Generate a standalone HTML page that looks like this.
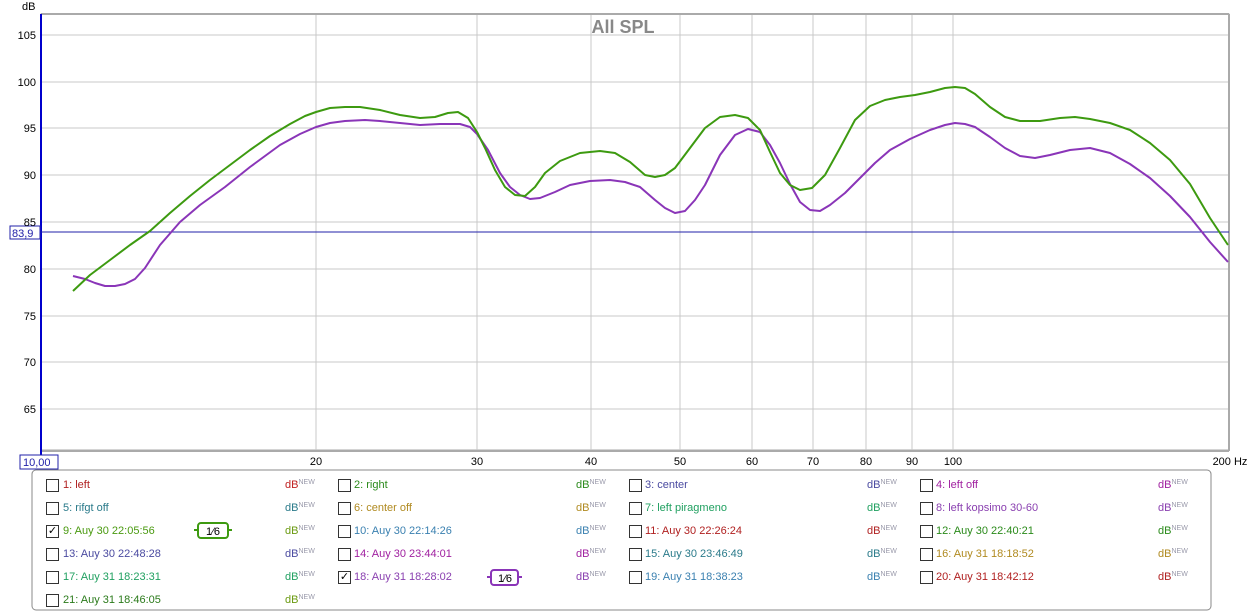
<!DOCTYPE html>
<html><head><meta charset="utf-8"><style>
body{margin:0;width:1248px;height:613px;background:#fff;font-family:"Liberation Sans",Arial,sans-serif;overflow:hidden;position:relative}
.t{position:absolute;font-size:11px;white-space:nowrap}
.cb{position:absolute;width:11px;height:11px;border:1px solid #333;background:#fff}
.db{position:absolute;font-size:11px}
.db sup{font-size:7px;color:#99a;vertical-align:4px}
.lg{position:absolute;left:0;top:2px;width:1248px;height:613px}
</style></head><body>
<svg width="1248" height="613" style="position:absolute;left:0;top:0">
<text x="22" y="10" font-size="11" font-family="Liberation Sans" fill="#000">dB</text>
<rect x="41" y="14" width="1188" height="436" fill="#fff" stroke="#aaa"/>
<g stroke="#c8c8c8" stroke-width="1">
<line x1="41" y1="35" x2="1229" y2="35"/><line x1="41" y1="82" x2="1229" y2="82"/><line x1="41" y1="128" x2="1229" y2="128"/><line x1="41" y1="175" x2="1229" y2="175"/><line x1="41" y1="222" x2="1229" y2="222"/><line x1="41" y1="269" x2="1229" y2="269"/><line x1="41" y1="316" x2="1229" y2="316"/><line x1="41" y1="362" x2="1229" y2="362"/><line x1="41" y1="409" x2="1229" y2="409"/>
<line x1="316" y1="14" x2="316" y2="450"/><line x1="477" y1="14" x2="477" y2="450"/><line x1="591" y1="14" x2="591" y2="450"/><line x1="680" y1="14" x2="680" y2="450"/><line x1="752" y1="14" x2="752" y2="450"/><line x1="813" y1="14" x2="813" y2="450"/><line x1="866" y1="14" x2="866" y2="450"/><line x1="912" y1="14" x2="912" y2="450"/><line x1="953" y1="14" x2="953" y2="450"/>
</g>
<line x1="41" y1="14" x2="1229" y2="14" stroke="#aaa" stroke-width="2"/>
<line x1="41" y1="451" x2="1229" y2="451" stroke="#aaa" stroke-width="2"/>
<line x1="1229" y1="14" x2="1229" y2="451" stroke="#aaa" stroke-width="2"/>
<line x1="41" y1="14" x2="41" y2="463" stroke="#00c" stroke-width="2"/>
<line x1="41" y1="232" x2="1229" y2="232" stroke="#22a" stroke-width="1"/>
<rect x="10" y="226" width="30" height="13" fill="#fff" stroke="#22a"/>
<text x="12" y="237" font-size="11" font-family="Liberation Sans" fill="#22a">83,9</text>
<rect x="20" y="455" width="38" height="14" fill="#fff" stroke="#22a"/>
<text x="23" y="466" font-size="11" font-family="Liberation Sans" fill="#22a">10,00</text>
<text x="623" y="33" font-size="18" font-weight="bold" font-family="Liberation Sans" fill="#888" text-anchor="middle">All SPL</text>
<g font-size="11" font-family="Liberation Sans" fill="#000" text-anchor="end">
<text x="36" y="39">105</text><text x="36" y="86">100</text><text x="36" y="132">95</text><text x="36" y="179">90</text><text x="36" y="226">85</text><text x="36" y="273">80</text><text x="36" y="320">75</text><text x="36" y="366">70</text><text x="36" y="413">65</text>
</g>
<g font-size="11" font-family="Liberation Sans" fill="#000" text-anchor="middle">
<text x="316" y="465">20</text><text x="477" y="465">30</text><text x="591" y="465">40</text><text x="680" y="465">50</text><text x="752" y="465">60</text><text x="813" y="465">70</text><text x="866" y="465">80</text><text x="912" y="465">90</text><text x="953" y="465">100</text><text x="1230" y="465">200 Hz</text>
</g>
<polyline fill="none" stroke="#8a35b8" stroke-width="2" stroke-linejoin="round" points="73,276 85,279 95,283 105,286 115,286 125,284 135,279 145,268 160,245 180,222 200,205 225,187 250,167 280,145 300,134 316,127 330,123 345,121 365,120 380,121 400,123 420,125 440,124 460,124 470,127 477,134 488,150 500,173 510,187 520,195 530,199 540,198 555,192 570,185 590,181 610,180 625,182 640,187 655,200 665,208 675,213 685,211 695,200 705,185 720,155 735,135 748,129 760,132 770,145 780,163 790,184 800,202 810,210 820,211 830,205 845,193 860,178 875,163 890,150 910,139 930,130 945,125 955,123 965,124 975,127 990,137 1005,148 1020,156 1035,158 1050,155 1070,150 1090,148 1110,153 1130,164 1150,178 1170,196 1190,217 1210,242 1228,262"/>
<polyline fill="none" stroke="#3d9a10" stroke-width="2" stroke-linejoin="round" points="73,291 90,275 110,260 130,245 150,231 170,213 190,196 210,180 230,165 250,150 270,136 290,124 305,116 316,112 330,108 345,107 360,107 380,110 400,115 420,118 435,117 448,113 458,112 468,118 477,132 485,148 495,170 505,187 515,195 525,196 535,187 545,173 560,161 580,153 600,151 615,153 630,162 645,175 655,177 665,175 675,168 690,148 705,128 720,117 735,115 748,118 760,130 770,152 780,173 790,185 800,190 812,188 825,175 840,148 855,120 870,106 885,100 900,97 915,95 930,92 945,88 955,87 965,88 975,94 990,107 1005,117 1020,121 1040,121 1060,118 1075,117 1090,119 1110,123 1130,130 1150,143 1170,160 1190,184 1210,218 1228,245"/>
<rect x="32" y="470" width="1179" height="140" rx="4" fill="none" stroke="#888"/>
<rect x="198" y="523" width="30" height="15" rx="3" fill="#fff" stroke="#3d9a10" stroke-width="2"/>
<line x1="194" y1="530" x2="198" y2="530" stroke="#3d9a10" stroke-width="2"/><line x1="228" y1="530" x2="232" y2="530" stroke="#3d9a10" stroke-width="2"/>
<text x="213" y="535" font-size="11" font-family="Liberation Sans" fill="#000" text-anchor="middle">1⁄6</text>
<rect x="491" y="570" width="27" height="15" rx="3" fill="#fff" stroke="#8a35b8" stroke-width="2"/>
<line x1="487" y1="577" x2="491" y2="577" stroke="#8a35b8" stroke-width="2"/><line x1="518" y1="577" x2="522" y2="577" stroke="#8a35b8" stroke-width="2"/>
<text x="505" y="582" font-size="11" font-family="Liberation Sans" fill="#000" text-anchor="middle">1⁄6</text>
</svg>
<div class="lg">
<div class="cb" style="left:46px;top:477px"></div><div class="t" style="left:63px;top:477px;color:#b02020">1: left</div><div class="db" style="left:285px;top:477px;color:#c02020">dB<sup>NEW</sup></div>
<div class="cb" style="left:338px;top:477px"></div><div class="t" style="left:354px;top:477px;color:#2a8a1a">2: right</div><div class="db" style="left:576px;top:477px;color:#2a8a1a">dB<sup>NEW</sup></div>
<div class="cb" style="left:629px;top:477px"></div><div class="t" style="left:645px;top:477px;color:#4a4aa0">3: center</div><div class="db" style="left:867px;top:477px;color:#4a4aa0">dB<sup>NEW</sup></div>
<div class="cb" style="left:920px;top:477px"></div><div class="t" style="left:936px;top:477px;color:#a020a0">4: left off</div><div class="db" style="left:1158px;top:477px;color:#a020a0">dB<sup>NEW</sup></div>

<div class="cb" style="left:46px;top:500px"></div><div class="t" style="left:63px;top:500px;color:#2a7a8a">5: rifgt off</div><div class="db" style="left:285px;top:500px;color:#2a7a8a">dB<sup>NEW</sup></div>
<div class="cb" style="left:338px;top:500px"></div><div class="t" style="left:354px;top:500px;color:#b08a20">6: center off</div><div class="db" style="left:576px;top:500px;color:#b08a20">dB<sup>NEW</sup></div>
<div class="cb" style="left:629px;top:500px"></div><div class="t" style="left:645px;top:500px;color:#20a060">7: left piragmeno</div><div class="db" style="left:867px;top:500px;color:#20a060">dB<sup>NEW</sup></div>
<div class="cb" style="left:920px;top:500px"></div><div class="t" style="left:936px;top:500px;color:#8a40b0">8: left kopsimo 30-60</div><div class="db" style="left:1158px;top:500px;color:#8a40b0">dB<sup>NEW</sup></div>

<div class="cb" style="left:46px;top:523px;font-size:11px;line-height:11px;text-align:center">✓</div><div class="t" style="left:63px;top:523px;color:#4a9a10">9: Auy 30 22:05:56</div><div class="db" style="left:285px;top:523px;color:#6a9a10">dB<sup>NEW</sup></div>
<div class="cb" style="left:338px;top:523px"></div><div class="t" style="left:354px;top:523px;color:#3a80b0">10: Auy 30 22:14:26</div><div class="db" style="left:576px;top:523px;color:#3a80b0">dB<sup>NEW</sup></div>
<div class="cb" style="left:629px;top:523px"></div><div class="t" style="left:645px;top:523px;color:#b02020">11: Auy 30 22:26:24</div><div class="db" style="left:867px;top:523px;color:#b02020">dB<sup>NEW</sup></div>
<div class="cb" style="left:920px;top:523px"></div><div class="t" style="left:936px;top:523px;color:#2a8a1a">12: Auy 30 22:40:21</div><div class="db" style="left:1158px;top:523px;color:#2a8a1a">dB<sup>NEW</sup></div>

<div class="cb" style="left:46px;top:546px"></div><div class="t" style="left:63px;top:546px;color:#4a4aa0">13: Auy 30 22:48:28</div><div class="db" style="left:285px;top:546px;color:#4a4aa0">dB<sup>NEW</sup></div>
<div class="cb" style="left:338px;top:546px"></div><div class="t" style="left:354px;top:546px;color:#a020a0">14: Auy 30 23:44:01</div><div class="db" style="left:576px;top:546px;color:#a020a0">dB<sup>NEW</sup></div>
<div class="cb" style="left:629px;top:546px"></div><div class="t" style="left:645px;top:546px;color:#2a7a8a">15: Auy 30 23:46:49</div><div class="db" style="left:867px;top:546px;color:#2a7a8a">dB<sup>NEW</sup></div>
<div class="cb" style="left:920px;top:546px"></div><div class="t" style="left:936px;top:546px;color:#b08a20">16: Auy 31 18:18:52</div><div class="db" style="left:1158px;top:546px;color:#b08a20">dB<sup>NEW</sup></div>

<div class="cb" style="left:46px;top:569px"></div><div class="t" style="left:63px;top:569px;color:#20a060">17: Auy 31 18:23:31</div><div class="db" style="left:285px;top:569px;color:#20a060">dB<sup>NEW</sup></div>
<div class="cb" style="left:338px;top:569px;font-size:11px;line-height:11px;text-align:center">✓</div><div class="t" style="left:354px;top:569px;color:#8a40b0">18: Auy 31 18:28:02</div><div class="db" style="left:576px;top:569px;color:#8a40b0">dB<sup>NEW</sup></div>
<div class="cb" style="left:629px;top:569px"></div><div class="t" style="left:645px;top:569px;color:#3a80b0">19: Auy 31 18:38:23</div><div class="db" style="left:867px;top:569px;color:#3a80b0">dB<sup>NEW</sup></div>
<div class="cb" style="left:920px;top:569px"></div><div class="t" style="left:936px;top:569px;color:#b02020">20: Auy 31 18:42:12</div><div class="db" style="left:1158px;top:569px;color:#b02020">dB<sup>NEW</sup></div>

<div class="cb" style="left:46px;top:592px"></div><div class="t" style="left:63px;top:592px;color:#2a7a1a">21: Auy 31 18:46:05</div><div class="db" style="left:285px;top:592px;color:#6a9a10">dB<sup>NEW</sup></div>
</div>
</body></html>
